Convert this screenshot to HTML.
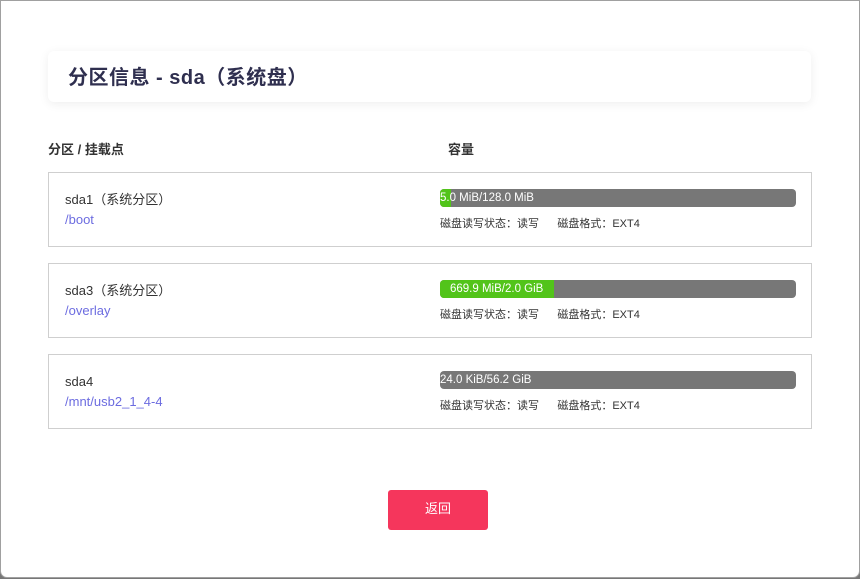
<!DOCTYPE html>
<html><head><meta charset="utf-8"><style>
*{box-sizing:border-box;margin:0;padding:0}
html,body{width:860px;height:579px;overflow:hidden;background:#777;font-family:"Liberation Sans","Noto Sans CJK SC",sans-serif}
.m{position:absolute;left:0;top:0;width:860px;height:578px;background:#fff;border:1px solid #a0a0a0;border-radius:0 0 7px 7px}
.w{position:absolute;left:-1px;top:-1px;width:860px;height:578px}
.t{position:absolute;left:48px;top:51px;width:763px;height:51px;border-radius:6px;box-shadow:0 2px 10px rgba(0,0,0,.07);background:#fff}
.t span{position:absolute;left:20px;top:10px;font-size:20px;font-weight:bold;color:#2f2f4f;letter-spacing:.5px}
.h{position:absolute;top:139px;font-size:13px;font-weight:bold;color:#333}
.r{position:absolute;left:48px;width:764px;height:75px;border:1px solid #cfcfcf}
.n{position:absolute;left:16px;top:17px;font-size:13px;color:#333;line-height:20px}
.n b{font-weight:normal;color:#6c6ce0;display:block}
.bar{position:absolute;left:391px;top:16px;width:356px;height:18px;background:#777;border-radius:4px;overflow:hidden}
.bar i{position:absolute;left:0;top:0;height:18px;background:#52c41a}
.bar s{position:absolute;left:0;top:0;text-decoration:none;color:#fff;font-size:11.5px;line-height:18px;white-space:nowrap}
.inf{position:absolute;left:391px;top:42px;font-size:11px;color:#333}
.btn{position:absolute;left:388px;top:490px;width:100px;height:40px;background:#f5365c;border-radius:3px;color:#fff;font-size:13px;text-align:center;line-height:38px}
</style></head><body>
<div class="m"><div class="w">
<div class="t"><span>分区信息 - sda（系统盘）</span></div>
<div class="h" style="left:48px">分区 / 挂载点</div>
<div class="h" style="left:448px">容量</div>
<div class="r" style="top:172px"><div class="n">sda1（系统分区）<b>/boot</b></div>
<div class="bar"><i style="width:11px"></i><s>5.0 MiB/128.0 MiB</s></div>
<div class="inf">磁盘读写状态：读写&nbsp;&nbsp;&nbsp;&nbsp;&nbsp;&nbsp;磁盘格式：EXT4</div></div>
<div class="r" style="top:263px"><div class="n">sda3（系统分区）<b>/overlay</b></div>
<div class="bar"><i style="width:114px"></i><s style="left:10px">669.9 MiB/2.0 GiB</s></div>
<div class="inf">磁盘读写状态：读写&nbsp;&nbsp;&nbsp;&nbsp;&nbsp;&nbsp;磁盘格式：EXT4</div></div>
<div class="r" style="top:354px"><div class="n">sda4<b>/mnt/usb2_1_4-4</b></div>
<div class="bar"><s>24.0 KiB/56.2 GiB</s></div>
<div class="inf">磁盘读写状态：读写&nbsp;&nbsp;&nbsp;&nbsp;&nbsp;&nbsp;磁盘格式：EXT4</div></div>
<div class="btn">返回</div>
</div></div>
</body></html>
